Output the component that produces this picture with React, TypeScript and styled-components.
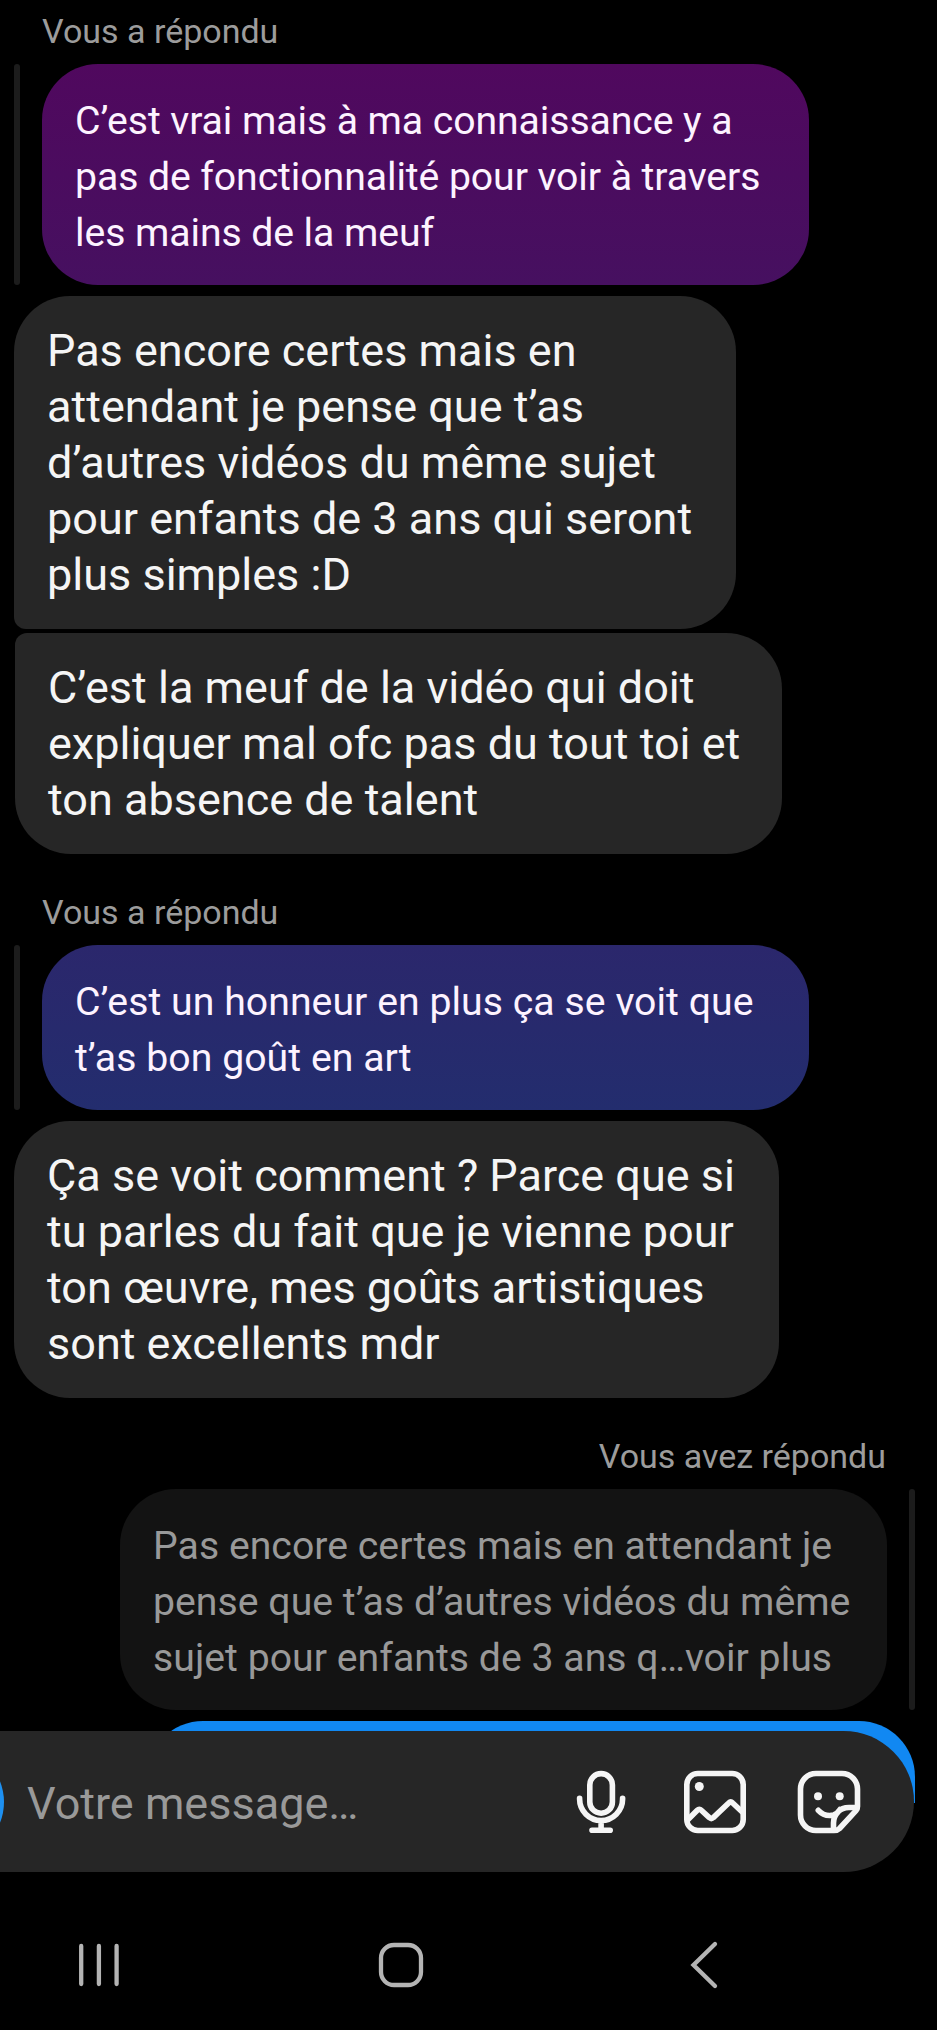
import React from "react";
import styled, { createGlobalStyle } from "styled-components";

const GlobalStyle = createGlobalStyle`
  * { box-sizing: border-box; }
  html, body { margin: 0; background: #000; }
  body { font-family: Roboto, "Liberation Sans", sans-serif; overflow: hidden; }
`;

const Screen = styled.div`
  width: 937px;
  height: 2030px;
  display: flex;
  flex-direction: column;
  background: #000;
  overflow: hidden;
`;

const Thread = styled.main`
  height: 1803px;
  flex: none;
  padding: 11px 22px 0 14px;
  display: flex;
  flex-direction: column;
  overflow: hidden;
`;

const ReplyGroup = styled.section<{ $mine?: boolean; $gap?: number }>`
  display: flex;
  flex-direction: column;
  align-items: ${(p) => (p.$mine ? "flex-end" : "flex-start")};
  margin-top: ${(p) => p.$gap ?? 0}px;
`;

const ReplyLabel = styled.div`
  margin: 0 29px 13px 28px;
  font-size: 34px;
  line-height: 40px;
  color: #9c9c9c;
  white-space: nowrap;
`;

const QuoteRow = styled.div<{ $mine?: boolean }>`
  display: flex;
  flex-direction: ${(p) => (p.$mine ? "row-reverse" : "row")};
  gap: 22px;
  margin-bottom: 11px;
`;

const QuoteBar = styled.div`
  width: 6px;
  border-radius: 3px;
  background: #1c1c1c;
`;

const Quote = styled.div<{ $fill: string; $color?: string; $tracking?: number }>`
  width: 767px;
  padding: 29px 0 24px 33px;
  border-radius: 56px;
  background: ${(p) => p.$fill};
  color: ${(p) => p.$color ?? "#fdf3ff"};
  font-size: 39.2px;
  line-height: 56px;
  letter-spacing: ${(p) => p.$tracking ?? 0}px;
  white-space: nowrap;
`;

const Bubble = styled.div<{ $width: number; $radius?: string }>`
  width: ${(p) => p.$width}px;
  padding: 26.5px 0 26.5px 33px;
  border-radius: ${(p) => p.$radius ?? "56px"};
  background: #262626;
  color: #f5f5f5;
  font-size: 45px;
  line-height: 56px;
  white-space: nowrap;

  & + & { margin: 4px 0 0 1px; }
`;

const SentBubble = styled.div`
  width: 768px;
  height: 160px;
  flex: none;
  border-radius: 56px;
  background: #1188f2;
`;

const Composer = styled.footer`
  position: relative;
  z-index: 1;
  flex: none;
  width: 914px;
  height: 141px;
  margin-top: -72px;
  padding-right: 53px;
  display: flex;
  align-items: center;
  overflow: hidden;
  border-radius: 0 70.5px 70.5px 0;
  background: #262626;
`;

const CameraButton = styled.div`
  width: 112px;
  height: 112px;
  flex: none;
  margin-left: -108px;
  border-radius: 50%;
  background: #1e90f0;
`;

const Placeholder = styled.div`
  flex: 1;
  padding: 5px 0 0 23px;
  font-size: 45px;
  line-height: 56px;
  color: #999;
`;

const Tools = styled.div`
  display: flex;
  gap: 50px;
`;

const ToolIcon = styled.svg`
  width: 64px;
  height: 64px;
  display: block;
  fill: none;
  stroke: #f5f5f5;
  stroke-width: 5.6;
  stroke-linecap: round;
  stroke-linejoin: round;

  circle { fill: #f5f5f5; stroke: none; }
`;

const SystemNav = styled.nav`
  flex: none;
  height: 158px;
  padding: 70px 218px 0 76px;
  display: flex;
  justify-content: space-between;
`;

const NavIcon = styled.svg`
  width: 48px;
  height: 48px;
  display: block;
  overflow: visible;
  fill: none;
  stroke: #b4b4b4;
  stroke-width: 4.3;
  stroke-linecap: round;
  stroke-linejoin: miter;
`;

function Lines({ text }: { text: string[] }) {
  return (
    <>
      {text.map((line) => (
        <div key={line}>{line}</div>
      ))}
    </>
  );
}

export default function App() {
  return (
    <Screen>
      <GlobalStyle />
      <Thread>
        <ReplyGroup>
          <ReplyLabel>Vous a répondu</ReplyLabel>
          <QuoteRow>
            <QuoteBar />
            <Quote $fill="linear-gradient(#50085e, #461060)" $tracking={-0.08}>
              <Lines
                text={[
                  "C’est vrai mais à ma connaissance y a",
                  "pas de fonctionnalité pour voir à travers",
                  "les mains de la meuf",
                ]}
              />
            </Quote>
          </QuoteRow>
          <Bubble $width={722} $radius="56px 56px 56px 12px">
            <Lines
              text={[
                "Pas encore certes mais en",
                "attendant je pense que t’as",
                "d’autres vidéos du même sujet",
                "pour enfants de 3 ans qui seront",
                "plus simples :D",
              ]}
            />
          </Bubble>
          <Bubble $width={767} $radius="12px 56px 56px 56px">
            <Lines
              text={[
                "C’est la meuf de la vidéo qui doit",
                "expliquer mal ofc pas du tout toi et",
                "ton absence de talent",
              ]}
            />
          </Bubble>
        </ReplyGroup>

        <ReplyGroup $gap={38}>
          <ReplyLabel>Vous a répondu</ReplyLabel>
          <QuoteRow>
            <QuoteBar />
            <Quote $fill="linear-gradient(#2b276c, #232d6e)" $tracking={0.05}>
              <Lines text={["C’est un honneur en plus ça se voit que", "t’as bon goût en art"]} />
            </Quote>
          </QuoteRow>
          <Bubble $width={765}>
            <Lines
              text={[
                "Ça se voit comment ? Parce que si",
                "tu parles du fait que je vienne pour",
                "ton œuvre, mes goûts artistiques",
                "sont excellents mdr",
              ]}
            />
          </Bubble>
        </ReplyGroup>

        <ReplyGroup $mine $gap={38}>
          <ReplyLabel>Vous avez répondu</ReplyLabel>
          <QuoteRow $mine>
            <QuoteBar />
            <Quote $fill="#131313" $color="#999" $tracking={0.03}>
              <Lines
                text={[
                  "Pas encore certes mais en attendant je",
                  "pense que t’as d’autres vidéos du même",
                  "sujet pour enfants de 3 ans q…voir plus",
                ]}
              />
            </Quote>
          </QuoteRow>
          <SentBubble />
        </ReplyGroup>
      </Thread>

      <Composer>
        <CameraButton />
        <Placeholder>Votre message…</Placeholder>
        <Tools>
          <ToolIcon viewBox="0 0 64 64">
            <rect x="20.8" y="3.6" width="22.6" height="39.6" rx="11.3" />
            <path d="M10.6 28.2v.8a21.5 21.5 0 0 0 43 0v-.8M32.1 51v9M23 60.3h18.2" />
          </ToolIcon>
          <ToolIcon viewBox="0 0 64 64">
            <rect x="3.8" y="3.5" width="56.4" height="57" rx="11" />
            <circle cx="16.3" cy="16.5" r="4.5" />
            <path d="M5.3 49.3 14.3 40.2q2-2 4 0l8 7.4q2 2 4 0L45.7 33q2-2 4 0l9.3 8.7" />
          </ToolIcon>
          <ToolIcon viewBox="0 0 64 64">
            <path d="M19 3.5H45A15.5 15.5 0 0 1 60.5 19V36.5Q60.5 39 59 40.6L42.5 58.5Q40.5 60.5 37 60.5H19A15.5 15.5 0 0 1 3.5 45V19A15.5 15.5 0 0 1 19 3.5Z" />
            <path d="M60 37.5H52Q45 37.5 41 42Q36.5 46.5 36.5 53V60M21.3 40.3Q27.5 47 36.5 45Q40 44 43 39.5" />
            <circle cx="21" cy="26.3" r="4" />
            <circle cx="42.7" cy="26.3" r="4" />
          </ToolIcon>
        </Tools>
      </Composer>

      <SystemNav>
        <NavIcon viewBox="0 0 48 48">
          <path d="M5.2 4v38M22.9 4v38M40.6 4v38" />
        </NavIcon>
        <NavIcon viewBox="0 0 48 48">
          <rect x="7" y="3" width="40" height="40" rx="13" />
        </NavIcon>
        <NavIcon viewBox="0 0 48 48">
          <path d="M44 2 22.5 23 44 44" />
        </NavIcon>
      </SystemNav>
    </Screen>
  );
}
